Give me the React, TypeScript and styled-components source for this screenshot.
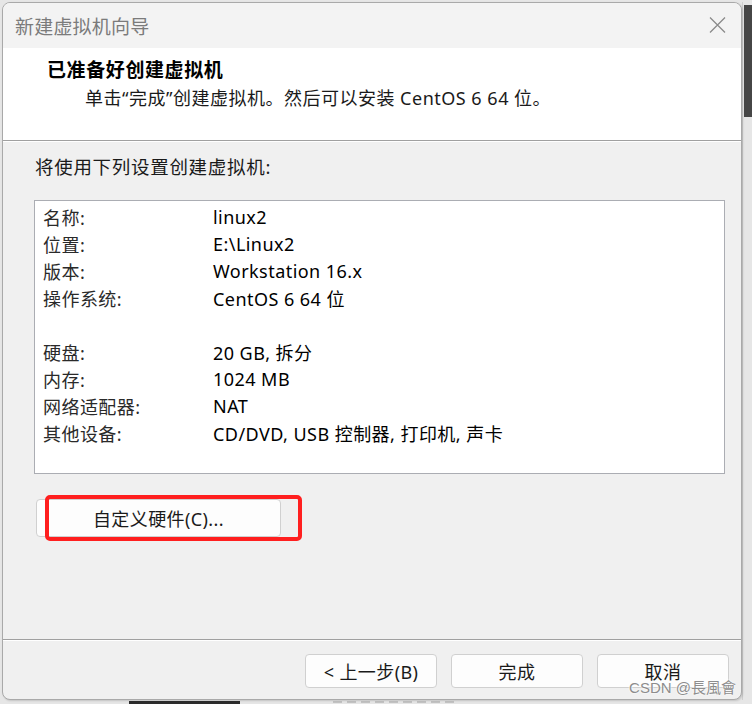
import React from 'react'
import styled, { createGlobalStyle } from 'styled-components'

const GlobalStyle = createGlobalStyle`
  html, body {
    margin: 0;
    padding: 0;
    background: #e6e6e6;
  }
  * {
    box-sizing: border-box;
  }
`

const FONT = `"Noto Sans", "Noto Sans CJK SC", sans-serif`

const Screen = styled.div`
  width: 752px;
  height: 704px;
  overflow: hidden;
  display: flex;
  flex-direction: column;
  font-family: ${FONT};
`

const TopRow = styled.div`
  display: flex;
  height: 700px;
  padding-top: 2px;
  padding-left: 2px;
`

const Side = styled.div`
  flex: 1;
  padding: 3px 0 0 1px;
  border-left: 1px solid #cfcfcf;
`

const SideDark = styled.div`
  height: 112px;
  background: #464646;
`

const BottomStrip = styled.div`
  height: 4px;
  display: flex;
  align-items: flex-start;
  padding-left: 129px;
  gap: 93px;
`

const TaskBar = styled.div`
  width: 111px;
  height: 4px;
  margin-top: 1px;
  background: #2c2c2c;
`

const FaintText = styled.div`
  width: 122px;
  height: 2px;
  margin-top: 1px;
  background: repeating-linear-gradient(90deg, #c4c4c4 0 9px, transparent 9px 14px);
`

const Window = styled.div`
  position: relative;
  width: 740px;
  height: 698px;
  border: 1px solid #a9a9a9;
  border-radius: 8px;
  overflow: hidden;
  display: flex;
  flex-direction: column;
  background: #f0f0f0;
  box-shadow: 1px 1px 2px rgba(0, 0, 0, 0.15);
`

const TitleBar = styled.div`
  height: 45px;
  flex: none;
  display: flex;
  align-items: center;
  justify-content: space-between;
  padding: 0 15px 0 12px;
  background: #f3f3f3;
`

const TitleText = styled.span`
  font-size: 19px;
  color: #7b7b7b;
  letter-spacing: 0.2px;
`

const CloseIcon = styled.svg`
  width: 17px;
  height: 16px;
  margin-top: -2px;
`

const Header = styled.div`
  height: 93px;
  flex: none;
  background: #ffffff;
  padding: 9px 0 0 44px;
  border-bottom: 1px solid #a0a0a0;
  box-shadow: 0 1px 0 #ffffff;
`

const HeaderTitle = styled.div`
  font-size: 19px;
  line-height: 26px;
  font-weight: 700;
  color: #000;
  letter-spacing: 0.6px;
`

const HeaderSub = styled.div`
  margin: 2px 0 0 38px;
  font-size: 18px;
  line-height: 26px;
  color: #1a1a1a;
  letter-spacing: 0.5px;
`

const Body = styled.div`
  flex: 1;
  padding: 13px 16px 0 31px;
  display: flex;
  flex-direction: column;
`

const Intro = styled.div`
  font-size: 18.5px;
  line-height: 26px;
  color: #1a1a1a;
  padding-left: 1px;
  letter-spacing: 0.7px;
`

const ListBox = styled.div`
  margin-top: 20px;
  height: 274px;
  background: #ffffff;
  border: 1px solid #abadb3;
  padding: 2px 0 0 8px;
`

const Row = styled.div`
  display: grid;
  grid-template-columns: 170px 1fr;
  height: 27px;
  align-items: center;
  font-size: 18px;
  letter-spacing: 0.45px;
`

const Label = styled.span`
  color: #2a2a2a;
`

const Value = styled.span`
  color: #000;
`

const ButtonWrap = styled.div`
  position: relative;
  margin: 25px 0 0 2px;
  width: 245px;
`

const Button = styled.button<{ $w?: number; $h?: number }>`
  width: ${p => p.$w ?? 132}px;
  height: ${p => p.$h ?? 34}px;
  background: #fdfdfd;
  border: 1px solid #d0d0d0;
  border-radius: 4px;
  font-family: ${FONT};
  font-size: 18px;
  letter-spacing: 0.4px;
  color: #1a1a1a;
  padding: 0;
  display: flex;
  align-items: center;
  justify-content: center;
`

const Highlight = styled.div`
  position: absolute;
  left: 9px;
  top: -4px;
  width: 257px;
  height: 46px;
  border: 4px solid #ff1f1f;
  border-radius: 5px;
  pointer-events: none;
`

const Footer = styled.div`
  height: 60px;
  flex: none;
  border-top: 1px solid #a0a0a0;
  box-shadow: inset 0 1px 0 #ffffff;
  display: flex;
  justify-content: flex-end;
  align-items: flex-start;
  gap: 14px;
  padding: 14px 12px 0 0;
`

const Watermark = styled.div`
  position: absolute;
  right: 5px;
  bottom: 2px;
  font-family: "Liberation Sans", "Noto Sans CJK TC", sans-serif;
  font-size: 15px;
  color: #8d8d8d;
  text-shadow: 0 0 2px #ffffff, 0 0 2px #ffffff;
  pointer-events: none;
`

const rows: Array<[string, string] | null> = [
  ['名称:', 'linux2'],
  ['位置:', 'E:\\Linux2'],
  ['版本:', 'Workstation 16.x'],
  ['操作系统:', 'CentOS 6 64 位'],
  null,
  ['硬盘:', '20 GB, 拆分'],
  ['内存:', '1024 MB'],
  ['网络适配器:', 'NAT'],
  ['其他设备:', 'CD/DVD, USB 控制器, 打印机, 声卡'],
]

const App = () => {
  return (
    <Screen>
      <GlobalStyle />
      <TopRow>
        <Window>
          <TitleBar>
            <TitleText>新建虚拟机向导</TitleText>
            <CloseIcon viewBox="0 0 17 16">
              <path d="M1 0.5 L16 15.5 M16 0.5 L1 15.5" stroke="#8a8a8a" strokeWidth="1.3" fill="none" />
            </CloseIcon>
          </TitleBar>

          <Header>
            <HeaderTitle>已准备好创建虚拟机</HeaderTitle>
            <HeaderSub>单击“完成”创建虚拟机。然后可以安装 CentOS 6 64 位。</HeaderSub>
          </Header>

          <Body>
            <Intro>将使用下列设置创建虚拟机:</Intro>
            <ListBox>
              {rows.map((row, i) =>
                row ? (
                  <Row key={i}>
                    <Label>{row[0]}</Label>
                    <Value>{row[1]}</Value>
                  </Row>
                ) : (
                  <Row key={i} />
                )
              )}
            </ListBox>
            <ButtonWrap>
              <Button $w={245} $h={38}>自定义硬件(C)...</Button>
              <Highlight />
            </ButtonWrap>
          </Body>

          <Footer>
            <Button>&lt; 上一步(B)</Button>
            <Button>完成</Button>
            <Button>取消</Button>
          </Footer>
          <Watermark>CSDN @長風會</Watermark>
        </Window>
        <Side>
          <SideDark />
        </Side>
      </TopRow>
      <BottomStrip>
        <TaskBar />
        <FaintText />
      </BottomStrip>
    </Screen>
  )
}

export default App
